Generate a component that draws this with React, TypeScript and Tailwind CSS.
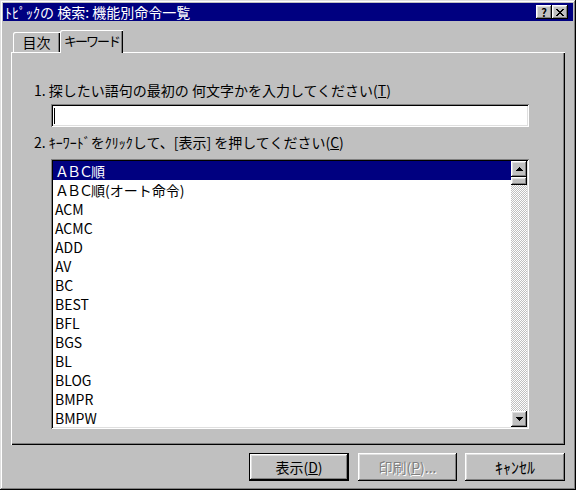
import React from 'react';

const raised =
  'shadow-[inset_-1px_-1px_#000,inset_1px_1px_#fff,inset_-2px_-2px_#808080,inset_2px_2px_#dfdfdf]';
const sunken =
  'shadow-[inset_1px_1px_#808080,inset_-1px_-1px_#fff,inset_2px_2px_#000,inset_-2px_-2px_#dfdfdf]';

const keywords = [
  'ACM',
  'ACMC',
  'ADD',
  'AV',
  'BC',
  'BEST',
  'BFL',
  'BGS',
  'BL',
  'BLOG',
  'BMPR',
  'BMPW',
];

function Arrow({ down }: { down?: boolean }) {
  return (
    <svg width="7" height="4" viewBox="0 0 7 4" className={down ? 'rotate-180' : ''}>
      <path d="M3 0h1v1h1v1h1v1h1v1H0V3h1V2h1V1h1z" fill="#000" />
    </svg>
  );
}

export default function App() {
  return (
    <div className="w-[576px] h-[490px] bg-[#c0c0c0] p-[3px] flex flex-col font-['Noto_Sans_CJK_JP',sans-serif] text-[14px] leading-[16px] text-black shadow-[inset_-1px_-1px_#000,inset_1px_1px_#dfdfdf,inset_-2px_-2px_#808080,inset_2px_2px_#fff]">
      {/* Title bar */}
      <div className="h-[18px] bg-[#000080] flex items-center justify-between pl-[2px] pr-[5px]">
        <span className="text-white whitespace-pre">ﾄﾋﾟｯｸの 検索: 機能別命令一覧</span>
        <div className="flex">
          <button className={`w-[16px] h-[14px] bg-[#c0c0c0] flex items-center justify-center text-[11px] leading-none font-bold ${raised}`}>
            ?
          </button>
          <button className={`w-[16px] h-[14px] bg-[#c0c0c0] flex items-center justify-center ${raised}`}>
            <svg width="8" height="7" viewBox="0 0 8 7">
              <path
                d="M0 0h2v1h1v1h2V1h1V0h2v1H7v1H6v1H5v1h1v1h1v1h1v1H6V6H5V5H3v1H2v1H0V6h1V5h1V4h1V3H2V2H1V1H0z"
                fill="#000"
              />
            </svg>
          </button>
        </div>
      </div>

      <div className="px-[8px] pt-[9px] flex flex-col">
        {/* Tabs */}
        <div className="flex items-end pl-[2px] h-[22px]">
          <div className="w-[47px] h-[20px] flex items-center justify-center rounded-tl-[2px] shadow-[inset_1px_1px_#fff,inset_-1px_0_#000,inset_-2px_0_#808080]">
            目次
          </div>
          <div className="relative z-10 w-[63px] h-[23px] -mb-[1px] bg-[#c0c0c0] flex items-center justify-center pb-[2px] rounded-tl-[2px] text-[13px] tracking-[-2px] shadow-[inset_1px_1px_#fff,inset_-1px_0_#000,inset_-2px_0_#808080]">
            キーワード
          </div>
        </div>

        {/* Panel */}
        <div className="w-[554px] h-[393px] pt-[30px] pl-[23px] flex flex-col shadow-[inset_1px_1px_#fff,inset_-1px_-1px_#000,inset_-2px_-2px_#808080]">
          <div className="h-[16px] whitespace-pre">
            1. 探したい語句の最初の 何文字かを入力してください(<span className="underline">T</span>)
          </div>
          <div className={`mt-[6px] ml-[17px] w-[478px] h-[23px] bg-white flex items-center pl-[3px] ${sunken}`}>
            <div className="w-[1px] h-[16px] bg-black" />
          </div>
          <div className="mt-[7px] h-[16px] whitespace-pre">
            2. ｷｰﾜｰﾄﾞをｸﾘｯｸして、[表示] を押してください(<span className="underline">C</span>)
          </div>
          <div className={`mt-[9px] ml-[17px] w-[478px] h-[270px] bg-white p-[2px] flex ${sunken}`}>
            <div className="flex-1 flex flex-col">
              <div className="h-[19px] pl-[2px] flex items-center bg-[#000080] text-white whitespace-pre">
                <span className="tracking-[-2px]">ＡＢＣ</span>順
              </div>
              <div className="h-[19px] pl-[2px] flex items-center whitespace-pre">
                <span className="tracking-[-2px]">ＡＢＣ</span>順(オート命令)
              </div>
              {keywords.map((k) => (
                <div key={k} className="h-[19px] pl-[2px] flex items-center whitespace-pre">
                  {k}
                </div>
              ))}
            </div>
            <div className="w-[16px] flex flex-col bg-[repeating-conic-gradient(#c0c0c0_0_25%,#ffffff_0_50%)] bg-[length:2px_2px]">
              <div className={`h-[16px] bg-[#c0c0c0] flex items-center justify-center ${raised}`}>
                <Arrow />
              </div>
              <div className={`h-[8px] bg-[#c0c0c0] ${raised}`} />
              <div className="flex-1" />
              <div className={`h-[16px] bg-[#c0c0c0] flex items-center justify-center ${raised}`}>
                <Arrow down />
              </div>
            </div>
          </div>
        </div>

        {/* Buttons */}
        <div className="mt-[8px] flex justify-end">
          <button className="w-[100px] h-[28px] border border-black bg-[#c0c0c0]">
            <div className={`w-full h-full flex items-center justify-center ${raised}`}>
              表示(<span className="underline">D</span>)
            </div>
          </button>
          <button className={`ml-[9px] w-[99px] h-[28px] bg-[#c0c0c0] flex items-center justify-center text-[#808080] [text-shadow:1px_1px_#fff] ${raised}`}>
            印刷(<span className="underline">P</span>)...
          </button>
          <button className={`ml-[8px] w-[100px] h-[28px] bg-[#c0c0c0] flex items-center justify-center text-[16px] ${raised}`}>
            ｷｬﾝｾﾙ
          </button>
        </div>
      </div>
    </div>
  );
}
